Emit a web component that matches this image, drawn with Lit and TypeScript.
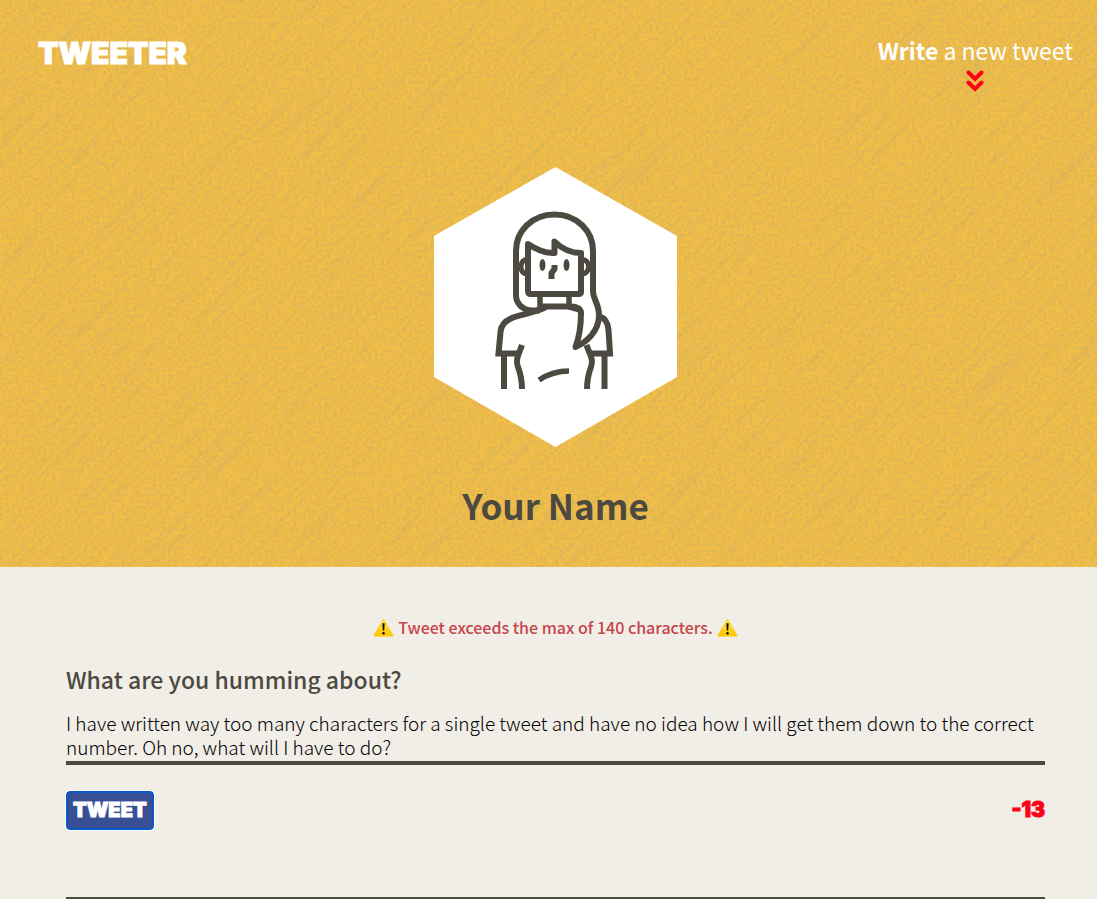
import { LitElement, html, css, svg } from "lit";
import { customElement, state } from "lit/decorators.js";

const MAX_LENGTH = 140;

const warningIcon = html`<svg class="warning" viewBox="0 0 21 19" aria-hidden="true">
  <defs>
    <linearGradient id="sign" x1="0" y1="0" x2="0" y2="1">
      <stop offset="0" stop-color="#ffdf4a" />
      <stop offset="1" stop-color="#ffc800" />
    </linearGradient>
  </defs>
  <path d="M10.5 1.4 19.6 17.6H1.4Z" fill="url(#sign)" stroke="url(#sign)" stroke-width="1.6" stroke-linejoin="round" />
  <path d="M9.3 5.2h2.4l-.5 7.4h-1.4Z" fill="#111" />
  <circle cx="10.5" cy="15.2" r="1.3" fill="#111" />
</svg>`;

const portrait = svg`
  <polygon points="121.5,0 243,69 243,210 121.5,280 0,210 0,69" fill="#fff" />
  <g fill="none" stroke="#4c4940" stroke-width="6" stroke-linejoin="round">
    <path d="M106 143.5H98C89 143 82 137 82 128V84C82 64 98 47.500 120.500 47.500S159 64 159 84V124C159 132 165 137 165 148C165 164 153 175 141.500 180C146 168 147 158 147 146C147 142 143 139.500 137 139.500H106" />
    <path d="M94 77C103 83 111 86.500 120.500 86V74.500C128 82 137 86 147 86V125Q147 127 144.500 127H97Q94 127 94 124Z" />
    <path d="M94 92.500C89 92.500 87 95 87 99.500S89 107 94 107M147 92.500C152 92.500 154.500 95 154.500 99.500S152 107 147 107" stroke-width="5" />
    <path d="M106 127V140M135 127V140" stroke-width="5.500" />
    <path d="M112 140C100 146 85 148 78 151C71 154 67 158 66.500 165L64.500 186.500H87" stroke-linejoin="miter" />
    <path d="M135 139.500L147 143" />
    <path d="M165 149C171 151 174 156 174.500 163L176 186.500H154" stroke-linejoin="miter" />
    <path d="M70 187V222M170.500 187V222" />
    <path d="M88 178C85 187 81 192 84 200C87 208 88 213 88 222M152.500 178C155.500 187 160 192 157 200C154 208 153 213 153 222" />
    <path d="M105 213C115 206.500 124 204 135 204" stroke-width="5.500" />
    <path d="M120.500 98V102L117.500 106V112" stroke-width="6" />
  </g>
  <g fill="#4c4940">
    <ellipse cx="108.500" cy="98" rx="3" ry="6" />
    <ellipse cx="132.500" cy="98" rx="3" ry="6" />
  </g>
`;

@customElement("app-root")
export class AppRoot extends LitElement {
  static styles = css`
    :host {
      display: block;
      min-height: 100vh;
      background: #f1eee7;
      color: #4c4940;
      font-family: "Noto Sans CJK SC", "Noto Sans", sans-serif;
    }
    *,
    *::before {
      box-sizing: border-box;
    }
    .banner {
      background-color: #f5bf44;
      background-image: url("data:image/svg+xml,%3Csvg xmlns='http://www.w3.org/2000/svg' width='1600' height='800'%3E%3Cfilter id='a' x='0' y='0' width='100%25' height='100%25' color-interpolation-filters='sRGB'%3E%3CfeTurbulence type='fractalNoise' baseFrequency='.32' numOctaves='3' seed='4'/%3E%3CfeColorMatrix values='0 0 0 0 .80 0 0 0 0 .69 0 0 0 0 .40 1.7 0 0 0 -.58'/%3E%3C/filter%3E%3Cfilter id='b' x='0' y='0' width='100%25' height='100%25' color-interpolation-filters='sRGB'%3E%3CfeTurbulence type='fractalNoise' baseFrequency='.01 .2' numOctaves='3' seed='9'/%3E%3CfeColorMatrix values='0 0 0 0 .74 0 0 0 0 .64 0 0 0 0 .42 2.4 0 0 0 -1.2'/%3E%3C/filter%3E%3Crect width='1600' height='800' filter='url(%23a)' opacity='.85'/%3E%3Crect x='-400' y='-1000' width='2400' height='2600' transform='rotate(-45 800 400)' filter='url(%23b)' opacity='.26'/%3E%3C/svg%3E");
    }
    .nav {
      display: flex;
      justify-content: space-between;
      align-items: flex-start;
      padding: 32px 24px 0 38px;
    }
    .display {
      font-family: Inter, "Liberation Sans", sans-serif;
      font-weight: 900;
    }
    .logo {
      color: #fff;
      font-size: 30px;
      line-height: 42px;
      text-decoration: none;
      -webkit-text-stroke: 1px #fff;
    }
    .compose-link {
      display: flex;
      flex-direction: column;
      align-items: center;
      padding: 0;
      border: 0;
      background: none;
      color: #fff;
      font: inherit;
      font-size: 23px;
      line-height: 36px;
      cursor: pointer;
    }
    .chevrons {
      width: 18px;
      height: 24px;
    }
    .profile {
      display: flex;
      flex-direction: column;
      align-items: center;
      padding: 75px 52px 36px 66px;
    }
    .portrait {
      width: 243px;
      height: 280px;
    }
    .name {
      margin: 32px 0 0;
      font-size: 35px;
      line-height: 52px;
      font-weight: 700;
    }
    .content {
      padding: 48px 52px 0 66px;
    }
    .error {
      display: flex;
      justify-content: center;
      align-items: center;
      gap: 4px;
      margin: 0;
      color: #c6444a;
      font-size: 16px;
      font-weight: 500;
      line-height: 24px;
    }
    .warning {
      width: 21px;
      height: 19px;
    }
    .compose {
      display: flex;
      flex-direction: column;
      padding-bottom: 67px;
      border-bottom: 4px solid #4c4940;
    }
    .label {
      margin: 22px 0 14px;
      font-size: 23px;
      font-weight: 500;
      line-height: 36px;
    }
    .text {
      display: block;
      width: 100%;
      height: 54px;
      padding: 0;
      border: 0;
      border-bottom: 4px solid #4c4940;
      outline: 0;
      overflow: hidden;
      resize: none;
      background: transparent;
      color: #000;
      font-family: inherit;
      font-size: 19px;
      font-weight: 300;
      line-height: 24px;
    }
    .actions {
      display: flex;
      justify-content: space-between;
      align-items: flex-start;
      margin-top: 26px;
    }
    .submit {
      height: 39px;
      padding: 0 5px 2px;
      border: 2px solid #0659c4;
      border-radius: 4px;
      outline: 1px solid #fff;
      background: #384f96;
      color: #fff;
      font-size: 20px;
      line-height: 32px;
      cursor: pointer;
      -webkit-text-stroke: 1px #fff;
    }
    .counter {
      color: #545149;
      font-size: 21px;
      line-height: 38px;
    }
    .over {
      color: #ff0019;
      -webkit-text-stroke: 1px #ff0019;
    }
  `;

  @state() private text =
    "I have written way too many characters for a single tweet and have no idea how I will get them down to the correct number. Oh no, what will I have to do?";

  private onInput(event: Event) {
    this.text = (event.target as HTMLTextAreaElement).value;
  }

  private focusComposer() {
    this.renderRoot.querySelector<HTMLTextAreaElement>("#tweet-text")?.focus();
  }

  render() {
    const remaining = MAX_LENGTH - this.text.length;
    const over = remaining < 0;
    return html`
      <header class="banner">
        <nav class="nav">
          <a class="logo display" href="#">TWEETER</a>
          <button class="compose-link" type="button" @click=${this.focusComposer}>
            <span><strong>Write</strong> a new tweet</span>
            <svg class="chevrons" viewBox="0 0 18 24" aria-hidden="true">
              <path d="M2.500 4.500 9 11l6.500-6.500M2.500 14.500 9 21l6.500-6.500" fill="none" stroke="#ff0019" stroke-width="4" stroke-linecap="round" />
            </svg>
          </button>
        </nav>
        <div class="profile">
          <svg class="portrait" viewBox="0 0 243 280" role="img" aria-label="Profile picture">${portrait}</svg>
          <h1 class="name">Your Name</h1>
        </div>
      </header>
      <main class="content">
        ${over
          ? html`<p class="error" role="alert">${warningIcon}<span>Tweet exceeds the max of 140 characters.</span>${warningIcon}</p>`
          : null}
        <form class="compose" @submit=${(e: Event) => e.preventDefault()}>
          <label class="label" for="tweet-text">What are you humming about?</label>
          <textarea id="tweet-text" class="text" name="text" spellcheck="false" .value=${this.text} @input=${this.onInput}></textarea>
          <div class="actions">
            <button class="submit display" type="submit">TWEET</button>
            <output class="counter display ${over ? "over" : ""}" for="tweet-text">${remaining}</output>
          </div>
        </form>
      </main>
    `;
  }
}
